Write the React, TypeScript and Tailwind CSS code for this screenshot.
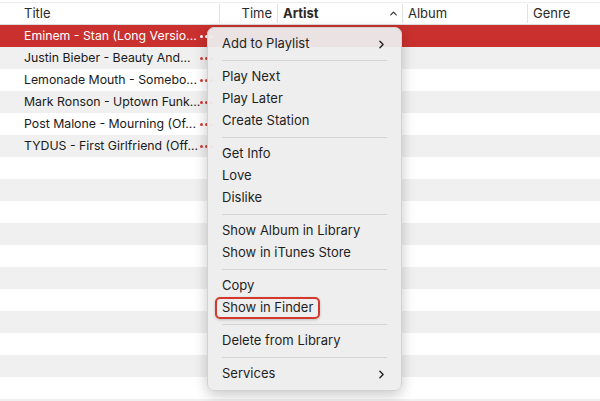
import { ChevronRight, ChevronUp } from "lucide-react";

const SONGS = [
  "Eminem - Stan (Long Versio...",
  "Justin Bieber - Beauty And...",
  "Lemonade Mouth - Somebo...",
  "Mark Ronson - Uptown Funk...",
  "Post Malone - Mourning (Of...",
  "TYDUS - First Girlfriend (Off...",
];

// null = separator
const MENU: (null | { label: string; sub?: boolean; mark?: boolean })[] = [
  { label: "Add to Playlist", sub: true },
  null,
  { label: "Play Next" },
  { label: "Play Later" },
  { label: "Create Station" },
  null,
  { label: "Get Info" },
  { label: "Love" },
  { label: "Dislike" },
  null,
  { label: "Show Album in Library" },
  { label: "Show in iTunes Store" },
  null,
  { label: "Copy" },
  { label: "Show in Finder", mark: true },
  null,
  { label: "Delete from Library" },
  null,
  { label: "Services", sub: true },
];

const ROWS = Array.from({ length: 18 }, (_, i) => i);

export default function App() {
  return (
    <div
      className="relative w-[600px] h-[401px] overflow-hidden bg-white pt-[2px] text-[13px] text-[#1d1d1d]"
      style={{ fontFamily: "Inter, 'Noto Sans', sans-serif" }}
    >
      {/* Column header */}
      <div className="flex h-[23px] items-center border-t border-[#ececec] border-b border-b-[#dcdcdc] bg-white text-[#2a2a2a]">
        <div className="w-[219px] pl-[24px]">Title</div>
        <div className="w-[58px] h-[19px] flex items-center justify-end pr-[5px] border-l border-[#e2e2e2]">Time</div>
        <div className="w-[125px] h-[19px] flex items-center justify-between pl-[5px] pr-[3px] border-l border-[#e2e2e2] font-bold">
          <span>Artist</span>
          <ChevronUp className="w-[11px] h-[11px]" strokeWidth={2.5} />
        </div>
        <div className="w-[125px] h-[19px] flex items-center pl-[5px] border-l border-[#e2e2e2]">Album</div>
        <div className="flex-1 h-[19px] flex items-center pl-[5px] border-l border-[#e2e2e2]">Genre</div>
      </div>

      {/* Song rows */}
      {ROWS.map((i) => {
        const selected = i === 0;
        const bg = selected ? "bg-[#c9302e]" : i % 2 === 1 ? "bg-[#f0f0f0]" : "bg-white";
        return (
          <div key={i} className={`flex h-[22px] items-center ${bg}`}>
            {SONGS[i] && (
              <>
                <span className={`w-[200px] pl-[24px] whitespace-nowrap text-[12.3px] ${selected ? "text-white" : "text-[#1a1a1a]"}`}>
                  {SONGS[i]}
                </span>
                {/* "more" dots */}
                <span className="flex gap-[2px] pt-[1px]">
                  {[0, 1, 2].map((d) => (
                    <span key={d} className={`w-[3px] h-[3px] rounded-full ${selected ? "bg-white" : "bg-[#d43b36]"}`} />
                  ))}
                </span>
              </>
            )}
          </div>
        );
      })}

      {/* Context menu */}
      <div className="absolute left-[207px] top-[27px] w-[195px] py-[5px] rounded-[7px] bg-[#ededed]/95 border border-[#d2d2d2] shadow-[0_4px_14px_rgba(0,0,0,0.22)] text-[#1f1f1f]">
        {MENU.map((item, idx) =>
          item === null ? (
            <div key={idx} className="h-[11px] flex items-center px-[14px]">
              <div className="h-px w-full bg-[#d4d4d4]" />
            </div>
          ) : (
            <div key={idx} className="h-[22px] flex items-center justify-between pl-[14px] pr-[13px]">
              {item.mark ? (
                <span className="-ml-[7px] h-[22px] flex items-center px-[5px] border-2 border-[#d5392c] rounded-[5px] shadow-[0_1px_3px_rgba(0,0,0,0.2)]">
                  {item.label}
                </span>
              ) : (
                <span>{item.label}</span>
              )}
              {item.sub && <ChevronRight className="w-[13px] h-[13px] text-[#222]" strokeWidth={2.5} />}
            </div>
          )
        )}
      </div>
    </div>
  );
}
